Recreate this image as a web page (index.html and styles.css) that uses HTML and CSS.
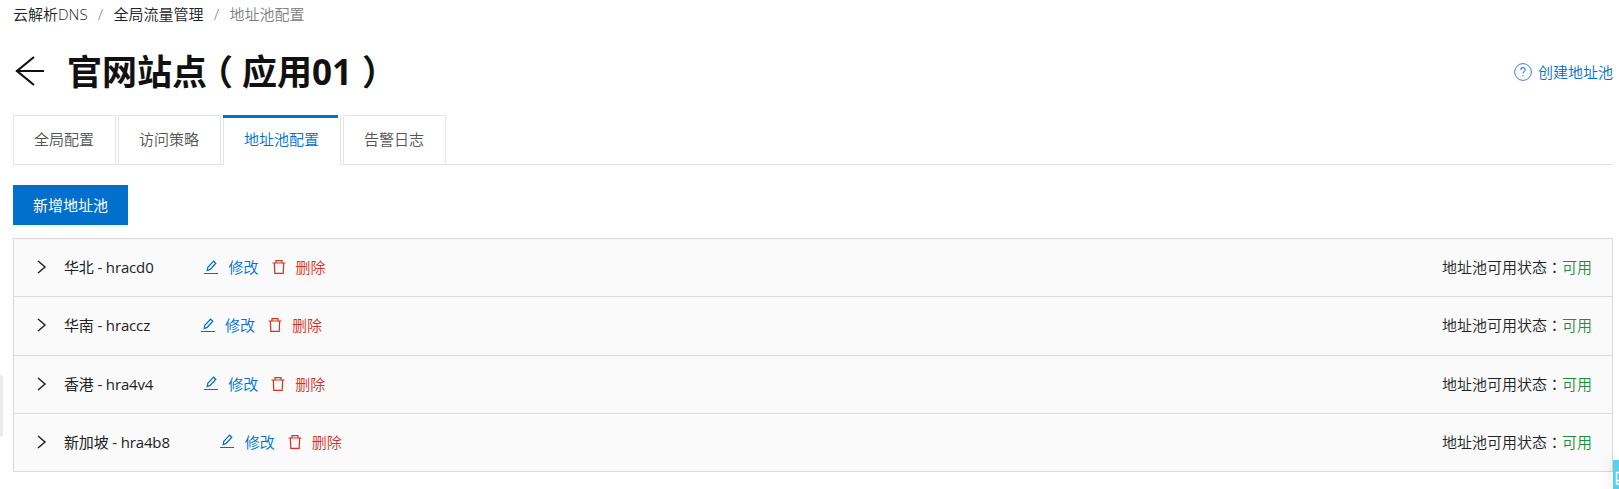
FILE: index.html
```
<!DOCTYPE html>
<html lang="zh-CN">
<head>
    <meta charset="UTF-8">
    <meta name="viewport" content="width=device-width, initial-scale=1.0">
    <title>地址池配置</title>
    <link rel="stylesheet" href="styles.css">
</head>
<body>
    <svg class="symbols" width="0" height="0">
        <symbol id="icon-arrow" viewBox="0 0 10 14">
            <path d="M1 1l7 6-7 6" fill="none" stroke="currentColor" stroke-width="1.5"/>
        </symbol>
        <symbol id="icon-edit" viewBox="0 0 14 15">
            <path d="M0 13.5h14M3.2 10.6l.6-3.3L9.6 1.2l2.2 2-5.6 6.2z" fill="none" stroke="currentColor" stroke-width="1.2"/>
        </symbol>
        <symbol id="icon-delete" viewBox="0 0 14 14">
            <path d="M.5 3h13M4 3V.7h6V3M2.3 3l.5 10.3h8.4L11.7 3" fill="none" stroke="currentColor" stroke-width="1.2"/>
        </symbol>
    </svg>
    <div class="page">
        <div class="breadcrumb">
            <a href="#">云解析DNS</a>
            <span class="separator">/</span>
            <a href="#">全局流量管理</a>
            <span class="separator">/</span>
            <span class="current">地址池配置</span>
        </div>
        <div class="header">
            <svg class="back" viewBox="0 0 30 30">
                <path d="M19 1L2 15l17 14M1 15h28" fill="none" stroke="currentColor" stroke-width="2.2"/>
            </svg>
            <h1>官网站点<span class="bracket-left">（</span>应用01<span class="bracket-right">）</span></h1>
            <a class="help" href="#">
                <svg viewBox="0 0 18 18">
                    <circle cx="9" cy="9" r="8.4" fill="none" stroke="currentColor" stroke-width="1"/>
                    <path d="M6.8 6.9c0-3 4.4-2.9 4.4-.2 0 1.7-2.2 1.7-2.2 3.9M9 12v1.3" fill="none" stroke="currentColor" stroke-width="1.1"/>
                </svg>
                创建地址池
            </a>
        </div>
        <div class="tabs">
            <a class="tab" href="#">全局配置</a>
            <a class="tab" href="#">访问策略</a>
            <a class="tab active" href="#">地址池配置</a>
            <a class="tab" href="#">告警日志</a>
        </div>
        <button class="btn-primary">新增地址池</button>
        <div class="pool-list">
            <div class="pool">
                <svg class="arrow"><use href="#icon-arrow"/></svg>
                <span class="name">华北 - hracd0</span>
                <a class="edit" href="#"><svg><use href="#icon-edit"/></svg>修改</a>
                <a class="delete" href="#"><svg><use href="#icon-delete"/></svg>删除</a>
                <span class="status">地址池可用状态<span class="colon" lang="zh-TW">：</span><span class="ok">可用</span></span>
            </div>
            <div class="pool">
                <svg class="arrow"><use href="#icon-arrow"/></svg>
                <span class="name">华南 - hraccz</span>
                <a class="edit" href="#"><svg><use href="#icon-edit"/></svg>修改</a>
                <a class="delete" href="#"><svg><use href="#icon-delete"/></svg>删除</a>
                <span class="status">地址池可用状态<span class="colon" lang="zh-TW">：</span><span class="ok">可用</span></span>
            </div>
            <div class="pool">
                <svg class="arrow"><use href="#icon-arrow"/></svg>
                <span class="name">香港 - hra4v4</span>
                <a class="edit" href="#"><svg><use href="#icon-edit"/></svg>修改</a>
                <a class="delete" href="#"><svg><use href="#icon-delete"/></svg>删除</a>
                <span class="status">地址池可用状态<span class="colon" lang="zh-TW">：</span><span class="ok">可用</span></span>
            </div>
            <div class="pool">
                <svg class="arrow"><use href="#icon-arrow"/></svg>
                <span class="name">新加坡 - hra4b8</span>
                <a class="edit" href="#"><svg><use href="#icon-edit"/></svg>修改</a>
                <a class="delete" href="#"><svg><use href="#icon-delete"/></svg>删除</a>
                <span class="status">地址池可用状态<span class="colon" lang="zh-TW">：</span><span class="ok">可用</span></span>
            </div>
        </div>
    </div>
    <div class="side-handle"></div>
    <div class="chat-widget">
        <svg viewBox="0 0 6 29">
            <path d="M6 12.5H3.5V24H6M3.5 20.5H6" fill="none" stroke="#fff" stroke-width="1.4"/>
        </svg>
    </div>
</body>
</html>
```
FILE: styles.css
```
* {
    box-sizing: border-box;
}
body {
    margin: 0;
    height: 489px;
    overflow: hidden;
    background: #fff;
    color: #222;
    font-family: "Open Sans", "Noto Sans CJK SC", sans-serif;
    font-size: 15px;
    font-weight: 350;
    line-height: 20px;
}
a {
    color: inherit;
    text-decoration: none;
}
.symbols {
    position: absolute;
}
.page {
    padding: 4px 6px 0 13px;
}
.breadcrumb {
    display: flex;
    height: 21px;
}
.separator {
    width: 26px;
    text-align: center;
    color: #777;
}
.current {
    color: #808080;
}
.header {
    display: flex;
    align-items: center;
    height: 90px;
    padding-top: 4px;
}
.back {
    width: 30px;
    height: 30px;
    margin: 0 22px 2px 2px;
    color: #111;
}
h1 {
    margin: 0;
    font-size: 35px;
    font-weight: 700;
    line-height: 48px;
    color: #111;
}
.bracket-left, .bracket-right {
    font-feature-settings: "halt";
}
.bracket-left {
    padding: 0 9px 0 8.5px;
}
.bracket-right {
    padding: 0 7.5px 0 10px;
}
.help {
    display: flex;
    align-items: center;
    margin-left: auto;
    color: #0070cc;
}
.help svg {
    width: 18px;
    height: 18px;
    margin: 0 6px 1px 0;
    color: #4a7fcb;
}
.tabs {
    display: flex;
    gap: 2px;
    height: 50px;
    border-bottom: 1px solid #e3e7eb;
}
.tab {
    height: 49px;
    padding: 13px 21px 0 20px;
    border: 1px solid #e3e7eb;
    border-bottom: none;
    color: #555;
}
.tab.active {
    height: 50px;
    border-top: none;
    padding-top: 0;
    color: #0070cc;
    background: #fff;
}
.tab.active::before {
    content: "";
    display: block;
    height: 3px;
    margin: 0 -19px 11px -21px;
    background: #0070cc;
}
.btn-primary {
    display: block;
    width: 115px;
    height: 40px;
    margin-top: 20px;
    padding: 0 0 1px;
    border: none;
    background: #0070cc;
    box-shadow: 0 2px 1px rgba(0, 0, 0, 0.04);
    color: #fff;
    font-family: inherit;
    font-size: 15px;
    font-weight: 400;
}
.pool-list {
    margin-top: 13px;
    border: 1px solid #d9d9d9;
    border-bottom: none;
    background: #fafafa;
}
.pool {
    display: flex;
    align-items: center;
    height: 58.25px;
    padding: 0 20px 1px 23px;
    border-bottom: 1px solid #d9d9d9;
}
.arrow {
    width: 10px;
    height: 14px;
    margin-right: 17px;
}
.name {
    margin-right: 50.5px;
    font-weight: 400;
    letter-spacing: -0.15px;
    white-space: nowrap;
}
.edit, .delete {
    display: flex;
    align-items: center;
}
.edit {
    margin-right: 13px;
    color: #0070cc;
}
.edit svg {
    width: 14px;
    height: 15px;
    margin-right: 10.5px;
}
.delete {
    color: #d93026;
}
.delete svg {
    width: 14px;
    height: 14px;
    margin-right: 10px;
}
.status {
    margin-left: auto;
}
.colon {
    font-family: "Noto Sans CJK TC", sans-serif;
}
.ok {
    color: #1e8e3e;
}
.side-handle {
    position: absolute;
    left: 0;
    top: 375px;
    width: 3px;
    height: 62px;
    background: #ebebeb;
    border-radius: 0 4px 4px 0;
}
.chat-widget {
    position: absolute;
    right: 0;
    bottom: 0;
    width: 6px;
    height: 29px;
    background: #5ad1ea;
    box-shadow: 0 0 12px rgba(0, 0, 0, 0.15);
}
.chat-widget svg {
    display: block;
    width: 6px;
    height: 29px;
}
```
